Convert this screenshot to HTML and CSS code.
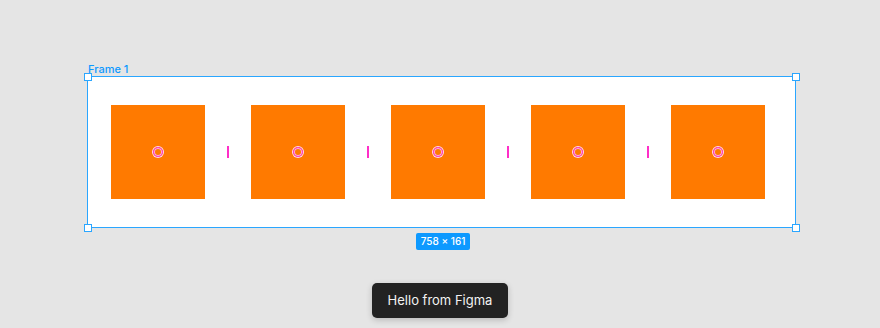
FILE: index.html
```html
<!DOCTYPE html>
<html lang="en">
  <head>
    <meta charset="UTF-8" />
    <title>Figma Canvas</title>
    <link rel="stylesheet" href="styles.css">
  </head>
  <body>
    <div class="canvas">
      <div class="frame-wrap">
        <div class="frame-label">Frame 1</div>
        <div class="frame">
          <span class="handle tl"></span>
          <span class="handle tr"></span>
          <span class="handle bl"></span>
          <span class="handle br"></span>
          <div class="square"><span class="dot"></span></div>
          <div class="spacer"><span class="gap-line"></span></div>
          <div class="square"><span class="dot"></span></div>
          <div class="spacer"><span class="gap-line"></span></div>
          <div class="square"><span class="dot"></span></div>
          <div class="spacer"><span class="gap-line"></span></div>
          <div class="square"><span class="dot"></span></div>
          <div class="spacer"><span class="gap-line"></span></div>
          <div class="square"><span class="dot"></span></div>
        </div>
        <div class="size-row">
          <span class="size-badge">758 × 161</span>
        </div>
      </div>
    </div>
    <div class="toast-row">
      <div class="toast">Hello from Figma</div>
    </div>
  </body>
</html>
```

FILE: styles.css
```css
/* Base */
body {
  margin: 0;
  background: #e5e5e5;
  font-family: Inter, "Noto Sans", sans-serif;
  height: 328px;
  overflow: hidden;
}

/* Canvas */
.canvas {
  padding: 63px 0 0 87px;
}

.frame-wrap {
  width: 709px;
}

.frame-label {
  height: 13px;
  padding-left: 1px;
  font-size: 11px;
  line-height: 12px;
  font-weight: 500;
  color: #0d99ff;
}

/* Frame */
.frame {
  position: relative;
  display: flex;
  align-items: center;
  box-sizing: border-box;
  width: 709px;
  height: 152px;
  padding: 0 30px 0 23px;
  background: #ffffff;
  border: 1px solid #2aa6ff;
}

.handle {
  position: absolute;
  width: 8px;
  height: 8px;
  box-sizing: border-box;
  background: #ffffff;
  border: 1.5px solid #2aa6ff;
}

.handle.tl { left: -4.5px; top: -4.5px; }
.handle.tr { right: -4.5px; top: -4.5px; }
.handle.bl { left: -4.5px; bottom: -4.5px; }
.handle.br { right: -4.5px; bottom: -4.5px; }

.square {
  display: flex;
  align-items: center;
  justify-content: center;
  width: 94px;
  height: 94px;
  background: #ff7a00;
  flex-shrink: 0;
}

.dot {
  width: 10px;
  height: 10px;
  box-sizing: border-box;
  border-radius: 50%;
  border: 1.5px solid #ff3fcf;
  background: transparent;
  box-shadow: 0 0 0 1px #ffd6f3, inset 0 0 0 1px #ffb0e8;
}

.spacer {
  display: flex;
  justify-content: center;
  width: 46px;
  flex-shrink: 0;
}

.gap-line {
  width: 1.5px;
  height: 12px;
  background: #ff2fc8;
}

/* Size badge */
.size-row {
  display: flex;
  justify-content: center;
  margin-top: 5px;
  padding-left: 3px;
}

.size-badge {
  padding: 0 5px;
  height: 17px;
  line-height: 17px;
  font-size: 10px;
  font-weight: 500;
  color: #ffffff;
  background: #0d99ff;
  border-radius: 2px;
}

/* Toast */
.toast-row {
  display: flex;
  justify-content: center;
  margin-top: 33px;
}

.toast {
  height: 35px;
  line-height: 35px;
  padding: 0 16px;
  font-size: 13px;
  color: #f2f2f2;
  background: #222222;
  border-radius: 5px;
  box-shadow: 0 2px 6px rgba(0, 0, 0, 0.2);
}
```
